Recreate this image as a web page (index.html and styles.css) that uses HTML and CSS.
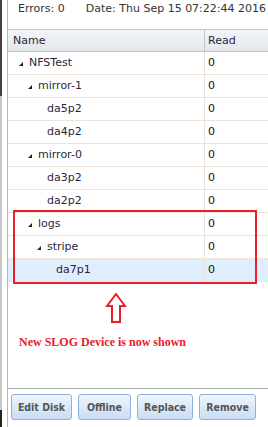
FILE: index.html
```html
<!DOCTYPE html>
<html lang="en">
<head>
  <meta charset="UTF-8">
  <title>Pool Status</title>
  <link rel="stylesheet" href="styles.css">
</head>
<body>
  <div class="edge"></div>
  <div class="panel">
    <div class="status">
      <span>Errors: 0</span>
      <span class="date">Date: Thu Sep 15 07:22:44 2016</span>
    </div>

    <div class="grid">
      <div class="grid-head">
        <div class="cell name">Name</div>
        <div class="cell read">Read</div>
      </div>
      <div class="grid-body">
        <div class="row"><div class="cell name lvl0"><span class="arrow"></span>NFSTest</div><div class="cell read">0</div></div>
        <div class="row"><div class="cell name lvl1"><span class="arrow"></span>mirror-1</div><div class="cell read">0</div></div>
        <div class="row"><div class="cell name lvl2">da5p2</div><div class="cell read">0</div></div>
        <div class="row"><div class="cell name lvl2">da4p2</div><div class="cell read">0</div></div>
        <div class="row"><div class="cell name lvl1"><span class="arrow"></span>mirror-0</div><div class="cell read">0</div></div>
        <div class="row"><div class="cell name lvl2">da3p2</div><div class="cell read">0</div></div>
        <div class="row"><div class="cell name lvl2">da2p2</div><div class="cell read">0</div></div>
        <div class="highlight">
          <div class="row"><div class="cell name lvl1"><span class="arrow"></span>logs</div><div class="cell read">0</div></div>
          <div class="row"><div class="cell name lvl2"><span class="arrow"></span>stripe</div><div class="cell read">0</div></div>
          <div class="row selected"><div class="cell name lvl3">da7p1</div><div class="cell read">0</div></div>
        </div>

        <div class="note">
          <svg class="up" width="22" height="31" viewBox="0 0 22 31">
            <path d="M11 1 L20 13 L15 13 L15 29 L7 29 L7 13 L2 13 Z" fill="none" stroke="#e8202a" stroke-width="2"/>
          </svg>
          <p>New SLOG Device is now shown</p>
        </div>
      </div>
    </div>

    <div class="toolbar">
      <button class="w61">Edit Disk</button>
      <button class="w53">Offline</button>
      <button class="w56">Replace</button>
      <button class="w57">Remove</button>
    </div>
  </div>
</body>
</html>
```

FILE: styles.css
```css
html, body {
  margin: 0;
  height: 100%;
  overflow: hidden;
}
body {
  display: flex;
  background: #fff;
  font-family: "DejaVu Sans", Verdana, sans-serif;
  font-size: 11px;
  color: #2a1f3d;
}
.edge {
  width: 2px;
  margin-right: 5px;
  background: linear-gradient(#444 0, #444 96px, #c8c8c8 96px, #c8c8c8 410px, #222 410px);
}
.panel {
  flex: 1;
  display: flex;
  flex-direction: column;
  border-left: 1px solid #b9b9b9;
  min-width: 0;
}
.status {
  height: 29px;
  padding-left: 10px;
  display: flex;
  gap: 21px;
  white-space: nowrap;
  overflow: hidden;
  line-height: 18px;
  color: #333;
}
.grid {
  flex: 1;
  display: flex;
  flex-direction: column;
  border-top: 1px solid #c5c5c5;
  border-bottom: 1px solid #a9a9a9;
}
.grid-head {
  display: flex;
  height: 21px;
  background: linear-gradient(#f3f5f7, #e3e7ec);
  border-bottom: 1px solid #c5c5c5;
  line-height: 22px;
}
.grid-head .name {
  border-right: 1px solid #c5c5c5;
}
.cell {
  box-sizing: border-box;
  white-space: nowrap;
}
.cell.name {
  width: 197px;
  padding-left: 5px;
}
.cell.read {
  flex: 1;
  padding-left: 3px;
}
.grid-body {
  flex: 1;
}
.row {
  display: flex;
  height: 23px;
  box-sizing: border-box;
  line-height: 22px;
  border-bottom: 1px solid #efe2d6;
}
.row .name {
  border-right: 1px solid #efe2d6;
}
.row .read {
  color: #111;
}
.row.selected {
  background: #dfeefc;
}
.cell.lvl0 { padding-left: 21px; }
.cell.lvl1 { padding-left: 30px; }
.cell.lvl2 { padding-left: 39px; }
.cell.lvl3 { padding-left: 48px; }
.arrow {
  display: inline-block;
  width: 0;
  height: 0;
  border-left: 4px solid transparent;
  border-bottom: 4px solid #222;
  margin-left: -10px;
  margin-right: 6px;
}
.highlight {
  position: relative;
}
.highlight::after {
  content: "";
  position: absolute;
  left: 5px;
  top: -3px;
  width: 240px;
  height: 70px;
  border: 2px solid #e8202a;
}
.note {
  padding: 11px 0 0 11px;
}
.up {
  display: block;
  margin-left: 86px;
}
.note p {
  margin: 11px 0 0;
  font-family: "Liberation Serif", "Times New Roman", serif;
  font-weight: bold;
  font-size: 12px;
  color: #e8202a;
}
.toolbar {
  height: 38px;
  display: flex;
  gap: 6px;
  padding: 5px 0 0 3px;
  box-sizing: border-box;
}
button {
  height: 26px;
  padding: 0;
  white-space: nowrap;
  border: 1px solid #8eb2da;
  border-radius: 3px;
  background: linear-gradient(#eef5fd, #c8ddf4);
  font-family: "DejaVu Sans Condensed", "DejaVu Sans", sans-serif;
  font-stretch: condensed;
  font-weight: bold;
  font-size: 10.5px;
  color: #555;
}
.w61 { width: 61px; }
.w53 { width: 53px; }
.w56 { width: 56px; }
.w57 { width: 57px; }
```
